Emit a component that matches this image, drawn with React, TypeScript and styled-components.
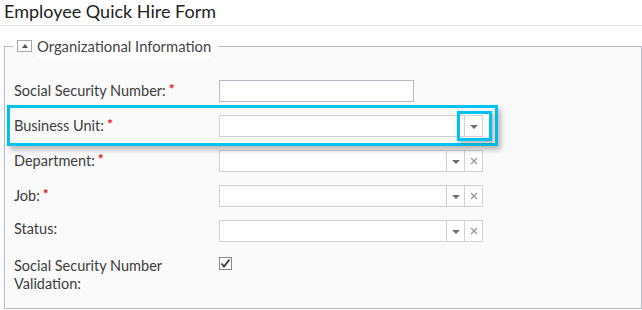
import React from "react";
import styled, { createGlobalStyle, css } from "styled-components";

const GlobalStyle = createGlobalStyle`
  html, body {
    margin: 0;
    padding: 0;
    background: #ffffff;
  }
  body {
    font-family: Lato, "Open Sans", sans-serif;
    color: #3a3a3a;
  }
`;

const Page = styled.div`
  width: 642px;
  height: 310px;
  overflow: hidden;
`;

const Title = styled.h1`
  margin: 0;
  padding: 0 0 0 4px;
  height: 26px;
  line-height: 22px;
  font-size: 18px;
  font-weight: 400;
  color: #222;
  border-bottom: 1px solid #e8e8ec;
  box-sizing: border-box;
`;

const Section = styled.fieldset`
  margin: 9px 0 0 4px;
  padding: 0;
  width: 638px;
  height: 274px;
  box-sizing: border-box;
  border: 1px solid #b9b9c9;
  background: #fafafa;
  min-inline-size: 0;
`;

const Legend = styled.legend`
  margin-left: 8px;
  padding: 0 6px 0 4px;
  display: flex;
  align-items: center;
  height: 22px;
`;

const Toggle = styled.span`
  width: 13px;
  height: 10px;
  border: 1px solid #a9a9a9;
  background: #fff;
  display: flex;
  align-items: center;
  justify-content: center;
  margin-right: 4px;
  margin-top: -1px;
  &::after {
    content: "";
    border-left: 3px solid transparent;
    border-right: 3px solid transparent;
    border-bottom: 4px solid #555;
  }
`;

const LegendText = styled.span`
  background: #fff;
  line-height: 22px;
  font-size: 14.8px;
  color: #444;
  padding: 0 1px;
`;

const Rows = styled.div`
  padding-top: 16px;
  display: flex;
  flex-direction: column;
`;

const Row = styled.div<{ $highlight?: boolean; $tall?: boolean }>`
  display: flex;
  align-items: flex-start;
  width: 485px;
  margin-left: 5px;
  padding-left: 4px;
  box-sizing: border-box;
  min-height: 35px;
  padding-top: ${(p) => (p.$tall ? "9px" : "7px")};
  ${(p) =>
    p.$highlight &&
    css`
      position: relative;
      z-index: 1;
      box-shadow: 0 0 0 3px #00c2f0, 3px 4px 5px 3px rgba(0, 0, 0, 0.25);
    `}
`;

const Label = styled.div`
  width: 205px;
  flex-shrink: 0;
  font-size: 14.5px;
  line-height: 18px;
  color: #3d3d3d;
`;

const Required = styled.span`
  color: #ee1111;
  font-size: 14px;
  font-weight: 700;
  margin-left: 3px;
  vertical-align: 2px;
`;

const TextInput = styled.div`
  width: 195px;
  height: 22px;
  box-sizing: border-box;
  border: 1px solid #b8b8c8;
  background: #fff;
`;

const Combo = styled.div`
  position: relative;
  width: 264px;
  height: 22px;
  box-sizing: border-box;
  border: 1px solid #d0d0d8;
  background: #fff;
  display: flex;
`;

const ComboText = styled.div`
  flex: 1;
`;

const ComboButton = styled.div`
  width: 17px;
  border-left: 1px solid #d0d0d8;
  display: flex;
  align-items: center;
  justify-content: center;
`;

const Arrow = styled.span`
  width: 0;
  height: 0;
  border-left: 4px solid transparent;
  border-right: 4px solid transparent;
  border-top: 4px solid #707070;
  margin-top: 1px;
`;

const Focus = styled.span`
  position: absolute;
  top: -5px;
  right: -10px;
  width: 35px;
  height: 30px;
  box-sizing: border-box;
  border: 3px solid #00c2f0;
  box-shadow: 2px 2px 4px rgba(0, 0, 0, 0.3);
  pointer-events: none;
`;

const Check = styled.span`
  width: 13px;
  height: 13px;
  box-sizing: border-box;
  border: 1px solid #8a8a8a;
  background: #fff;
  display: flex;
  align-items: center;
  justify-content: center;
`;

const ClearIcon = () => (
  <svg width="8" height="8" viewBox="0 0 8 8">
    <path d="M1 1L7 7M7 1L1 7" stroke="#9a9a9a" strokeWidth="1.3" />
  </svg>
);

const CheckIcon = () => (
  <svg width="11" height="11" viewBox="0 0 11 11">
    <path d="M1.5 5.5L4 8.5L9.5 1.5" fill="none" stroke="#3a3a3a" strokeWidth="1.8" />
  </svg>
);

type ComboProps = { clearable?: boolean; focused?: boolean };

const Select = ({ clearable = true, focused }: ComboProps) => (
  <Combo>
    <ComboText />
    <ComboButton>
      <Arrow />
    </ComboButton>
    {clearable && (
      <ComboButton>
        <ClearIcon />
      </ComboButton>
    )}
    {focused && <Focus />}
  </Combo>
);

const App = () => {
  return (
    <Page>
      <GlobalStyle />
      <Title>Employee Quick Hire Form</Title>
      <Section>
        <Legend>
          <Toggle />
          <LegendText>Organizational Information</LegendText>
        </Legend>
        <Rows>
          <Row>
            <Label>
              Social Security Number:<Required>*</Required>
            </Label>
            <TextInput />
          </Row>
          <Row $highlight>
            <Label>
              Business Unit:<Required>*</Required>
            </Label>
            <Select clearable={false} focused />
          </Row>
          <Row>
            <Label>
              Department:<Required>*</Required>
            </Label>
            <Select />
          </Row>
          <Row>
            <Label>
              Job:<Required>*</Required>
            </Label>
            <Select />
          </Row>
          <Row>
            <Label>Status:</Label>
            <Select />
          </Row>
          <Row $tall>
            <Label>
              Social Security Number
              <br />
              Validation:
            </Label>
            <Check>
              <CheckIcon />
            </Check>
          </Row>
        </Rows>
      </Section>
    </Page>
  );
};

export default App;
